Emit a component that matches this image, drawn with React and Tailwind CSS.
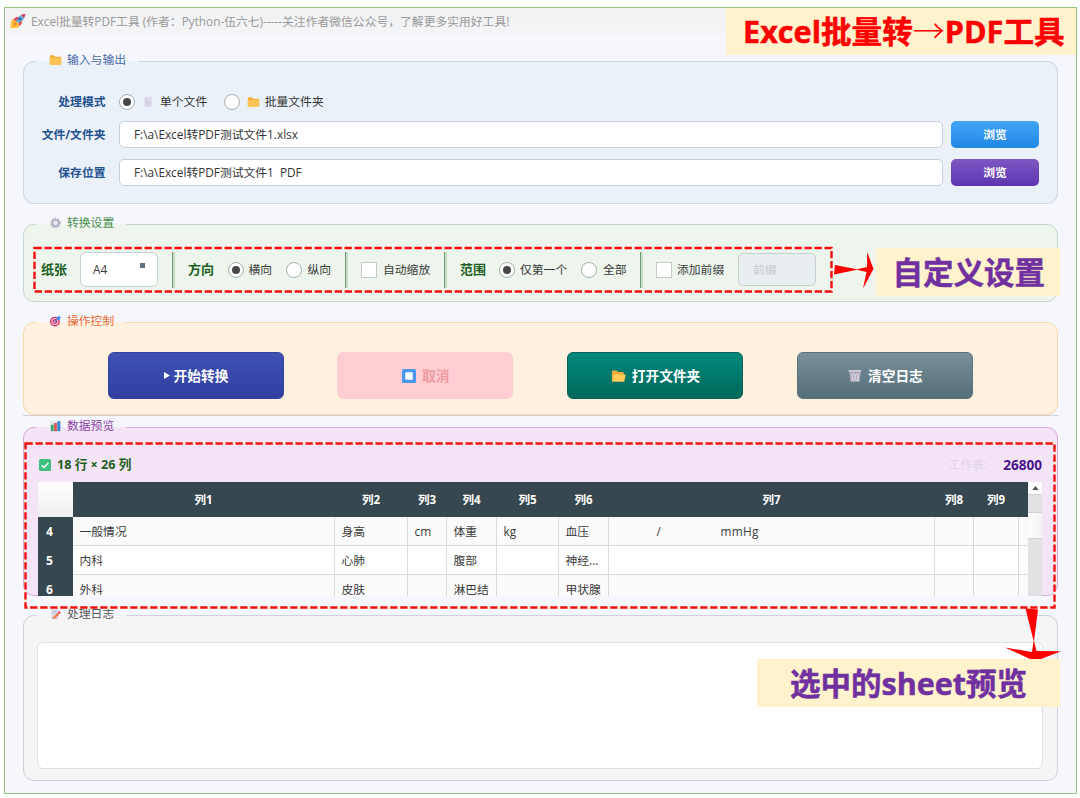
import clsx from "clsx";

const FolderIcon = ({ className }) => (
  <svg viewBox="0 0 16 14" className={className}>
    <path d="M1 2.5A1.2 1.2 0 0 1 2.2 1.3H6l1.7 1.6h6.1A1.2 1.2 0 0 1 15 4.1V12a1 1 0 0 1-1 1H2a1 1 0 0 1-1-1z" fill="#f5b03c" />
    <path d="M1 4.400h14v7.600a1 1 0 0 1-1 1H2a1 1 0 0 1-1-1z" fill="#fdc455" />
  </svg>
);

const OpenFolderIcon = ({ className }) => (
  <svg viewBox="0 0 16 14" className={className}>
    <path d="M1 2.2A1.2 1.2 0 0 1 2.2 1H6l1.6 1.6h5A1 1 0 0 1 13.500 3.600V12H1z" fill="#f0a93a" />
    <path d="M2.400 5.400h13.200L14.200 13H1z" fill="#fdcb58" />
  </svg>
);

const FileIcon = ({ className }) => (
  <svg viewBox="0 0 12 14" className={className}>
    <path d="M1.500 4L4.500 1h6v12h-9z" fill="#dfddeb" />
    <path d="M1.500 4h3V1z" fill="#cbc8dd" />
    <path d="M3 6.500h6M3 8.500h6M3 10.500h6" stroke="#cbc8dd" strokeWidth="1" />
  </svg>
);

const GearIcon = ({ className }) => (
  <svg viewBox="0 0 14 14" className={className}>
    <circle cx="7" cy="7" r="5.300" fill="none" stroke="#b5aec4" strokeWidth="1.800" strokeDasharray="2 1.330" />
    <circle cx="7" cy="7" r="3.600" fill="none" stroke="#aca4bd" strokeWidth="1.700" />
    <circle cx="7" cy="7" r="2.200" fill="#e9e6f2" />
  </svg>
);

const TargetIcon = ({ className }) => (
  <svg viewBox="0 0 14 14" className={className}>
    <circle cx="6.300" cy="7.700" r="5.800" fill="#d8356b" />
    <circle cx="6.300" cy="7.700" r="4.100" fill="#f3d3e2" />
    <circle cx="6.300" cy="7.700" r="2.900" fill="#d8356b" />
    <circle cx="6.300" cy="7.700" r="1.200" fill="#f3d3e2" />
    <path d="M6.300 7.700L10 4" stroke="#3b74c9" strokeWidth="1.200" />
    <path d="M8.600 2.800L11.300.3l.5 1.900 1.900.5L11.200 5.400H8.600z" fill="#3f8ee8" />
  </svg>
);

const ChartIcon = ({ className }) => (
  <svg viewBox="0 0 14 14" className={className}>
    <rect x="1" y="1" width="12" height="12" fill="#dfe3ec" />
    <rect x="1.500" y="5.500" width="3.300" height="7.500" fill="#35a768" />
    <rect x="5.300" y="3.500" width="3.300" height="9.500" fill="#e2574c" />
    <rect x="9.100" y="1.500" width="3.500" height="11.500" fill="#3b82d0" />
  </svg>
);

const MemoIcon = ({ className }) => (
  <svg viewBox="0 0 14 14" className={className}>
    <path d="M2 1h8.500v12H2z" fill="#dcdae9" />
    <path d="M3.500 4h5M3.500 6h4" stroke="#b9b5cc" strokeWidth=".8" />
    <path d="M4 11l5.800-6 2.200 2-5.800 5.500L3.400 13z" fill="#f4814f" />
    <path d="M9.800 5L11.300 3.400 13.300 5.400 12 7z" fill="#e23e57" />
  </svg>
);

const TrashIcon = ({ className }) => (
  <svg viewBox="0 0 14 14" className={className}>
    <path d="M1.200 2.500h11.600L11.600 13H2.400z" fill="#a9a4b3" />
    <path d="M3 4l2.500 8M6 4l2.200 8M9 4l1.300 8M11.500 4L9 12M8.500 4L5.500 12M5.500 4L3.500 11" stroke="#e6e1ec" strokeWidth=".75" />
    <rect x=".7" y="1" width="12.600" height="2" rx=".6" fill="#cdc7d6" />
  </svg>
);

const RocketIcon = ({ className }) => (
  <svg viewBox="0 0 16 16" className={className}>
    <path d="M4.800 9.500C6 5.500 9 2 15.300.7 14.500 7 10.500 10 6.600 11.300z" fill="#6fa9d2" />
    <path d="M3 6.500L6.500 3.800l2.300.4L5.500 9zM8 11l3.800-3.200v3L8.500 14z" fill="#e5485a" />
    <path d="M.8 15.200c-.3-2.700-.3-6.500 1.200-8.700l3.200 1L9 10.800c.4 1.600.2 2.700-.8 3.700-1.700.7-4.400.7-7.400.7z" fill="#fdbf3c" />
    <path d="M3 13c0-2 .8-3.300 2-3.800l1.900 1.900C6.400 12.300 5 13 3 13z" fill="#f58a3a" />
    <path d="M11.300 1.900c1.200-.6 2.500-1 4-1.200-.2 1.500-.6 2.800-1.200 4z" fill="#e5344d" />
    <circle cx="9.800" cy="6" r="1.600" fill="#2367b5" />
  </svg>
);

const StopIcon = ({ className }) => (
  <svg viewBox="0 0 14 14" className={className}>
    <rect width="14" height="14" rx="1.500" fill="#4a97ee" />
    <rect x="3.300" y="3.300" width="7.400" height="7.400" rx=".8" fill="#fff" />
  </svg>
);

const CheckIcon = ({ className }) => (
  <svg viewBox="0 0 12 12" className={className}>
    <rect width="12" height="12" rx="1.500" fill="#3fbf80" />
    <path d="M2.700 6.200l2.300 2.300 4.400-4.700" fill="none" stroke="#fff" strokeWidth="1.400" />
  </svg>
);

function Panel({ icon: Icon, title, className, legendClass, children }) {
  return (
    <fieldset className={clsx("ml-[18px] w-[1035px] shrink-0 rounded-[11px] border", className)}>
      <legend className={clsx("ml-3 flex h-4 items-center gap-[5px] pl-[13px] pb-[3px] text-[11.8px] leading-none whitespace-nowrap", legendClass)}>
        <Icon className="h-3 w-[13px]" />
        <span>{title}</span>
      </legend>
      {children}
    </fieldset>
  );
}

function Radio({ checked, className }) {
  return (
    <span className={clsx("flex size-4 shrink-0 items-center justify-center rounded-full border border-[#a9adab] bg-white", className)}>
      {checked && <span className="size-2 rounded-full bg-[#474747]" />}
    </span>
  );
}

const CheckBox = ({ className }) => <span className={clsx("size-4 shrink-0 border border-[#c3cbc4] bg-white", className)} />;

const Divider = ({ className }) => (
  <span className={clsx("h-9 w-[3px] shrink-0 border-l border-[#6f9a75] bg-[#c3dcc5]", className)} />
);

const columns = [
  { label: "列1", width: "w-[262px]" },
  { label: "列2", width: "w-[73px]" },
  { label: "列3", width: "w-[39px]" },
  { label: "列4", width: "w-[50px]" },
  { label: "列5", width: "w-[62px]" },
  { label: "列6", width: "w-[50px]" },
  { label: "列7", width: "w-[326px]" },
  { label: "列8", width: "w-[39px]" },
  { label: "列9", width: "w-[45px]" },
];

const rows = [
  { id: 4, cells: ["一般情况", "身高", "cm", "体重", "kg", "血压", ["/", "mmHg"], "", ""] },
  { id: 5, cells: ["内科", "心肺", "", "腹部", "", "神经...", "", "", ""] },
  { id: 6, cells: ["外科", "皮肤", "", "淋巴结", "", "甲状腺", "", "", ""] },
];

function PreviewTable() {
  return (
    <div className="ml-[14px] flex h-[114px] w-[1004px] overflow-hidden text-[11.8px] leading-none">
      <div className="w-[990px] overflow-hidden">
        <div className="flex h-[35px] bg-[#37474f] font-bold text-white">
          <div className="w-[35px] shrink-0 bg-linear-to-b from-white to-[#eeeeee]" />
          {columns.map((col) => (
            <div key={col.label} className={clsx("flex shrink-0 items-center justify-center pr-px text-[11.500px]", col.width)}>
              {col.label}
            </div>
          ))}
        </div>
        {rows.map((row, i) => (
          <div key={row.id} className={clsx("flex h-[29px] text-[#3a3a3a]", i % 2 ? "bg-white" : "bg-[#fafafa]")}>
            <div className="flex w-[35px] shrink-0 items-center bg-[#37474f] pt-px pl-2 text-xs font-bold text-white">{row.id}</div>
            {row.cells.map((cell, n) => (
              <div
                key={n}
                className={clsx("flex shrink-0 items-center overflow-hidden border-r border-b border-[#d9dcdc] pt-px pl-[6.500px] whitespace-nowrap", columns[n].width)}
              >
                {Array.isArray(cell) ? (
                  <>
                    <span className="ml-[41px] w-16">{cell[0]}</span>
                    <span className="tracking-[0.300px]">{cell[1]}</span>
                  </>
                ) : (
                  cell
                )}
              </div>
            ))}
            <div className="grow border-b border-[#d9dcdc]" />
          </div>
        ))}
      </div>
      <div className="flex w-[14px] flex-col bg-[#e2e2e4]">
        <div className="flex h-[13px] items-center justify-center border-b border-[#cfcfcf] bg-white">
          <svg viewBox="0 0 8 5" className="h-[4px] w-[7px]">
            <path d="M0 5L4 0l4 5z" fill="#555" />
          </svg>
        </div>
        <div className="mt-[17px] h-[27px] border-y border-[#d2d2d2] bg-linear-to-r from-white to-[#f2f2f2]" />
      </div>
    </div>
  );
}

function PathRow({ label, value, button, className }) {
  return (
    <div className={clsx("flex h-[27px] items-center", className)}>
      <span className="w-[81.500px] text-right font-bold text-[#24518f]">{label}</span>
      <div className="ml-[13.500px] flex h-[27px] w-[824px] items-center rounded-[5px] border border-[#c9cfd6] bg-white pl-[14px] text-[#333] [word-spacing:3px]">
        {value}
      </div>
      <button className={clsx("ml-[8px] h-[27px] w-[88px] rounded-[5px] bg-linear-to-b font-bold text-white", button)}>浏览</button>
    </div>
  );
}

const actions = [
  {
    label: "开始转换",
    style: "border-[#34419b] from-[#3f51b5] to-[#303f9f] text-white gap-[4px]",
    icon: () => (
      <svg viewBox="0 0 6 7" className="h-[7px] w-[6px]">
        <path d="M0 0l6 3.500L0 7z" fill="#fff" />
      </svg>
    ),
  },
  { label: "取消", style: "border-[#ffcdd2] from-[#ffcdd2] to-[#ffcdd2] text-[#ee9ba2] gap-[6px]", icon: () => <StopIcon className="size-[14px]" /> },
  { label: "打开文件夹", style: "border-[#0b6156] from-[#00897b] to-[#00695c] text-white gap-[6px]", icon: () => <OpenFolderIcon className="h-[14px] w-[15px]" /> },
  { label: "清空日志", style: "border-[#5d707a] from-[#78909c] to-[#546e7a] text-white gap-[6px]", icon: () => <TrashIcon className="size-[14px]" /> },
];

// red dashed frames and arrows drawn over the window
function Annotations() {
  return (
    <>
      <svg className="pointer-events-none absolute inset-0 h-[798px] w-[1080px]" viewBox="0 0 1080 798" fill="none">
        <g stroke="#fff0e0" strokeWidth="3">
          <rect x="34.500" y="248" width="797" height="43.500" />
          <rect x="25.500" y="443.500" width="1029" height="164" />
        </g>
        <g stroke="#ee1013" strokeWidth="2.400" strokeDasharray="7.300 2.700">
          <rect x="34.500" y="248" width="797" height="43.500" />
          <rect x="25.500" y="443.500" width="1029" height="164" />
        </g>
        <g fill="#fe0000">
          <path d="M835 265l22 4.200 10-2.200.2-15L873.500 269 863 288.500l3.500-16.500-9.500-2.200-23 4.700z" />
          <path d="M1025.500 608.500l12.500 1-4 31.500 2.500 10 24.500.3-20 7.700h-11l-25-11.500 27 4.500 1.600-11z" />
        </g>
      </svg>
      <div className="absolute top-[8px] left-[726px] flex h-[47px] w-[350px] items-center bg-[#fff2cc] pb-px pl-[17px] text-[30.600px] font-bold whitespace-nowrap text-[#fe0000] [-webkit-text-stroke:0.500px_#fe0000]">
        Excel批量转
        <span className="w-8 text-[32px] font-light [-webkit-text-stroke:0px]">→</span>
        PDF工具
      </div>
      <div className="absolute top-[248px] left-[876px] flex h-12 w-[184px] items-center bg-[#fff2cc] pl-[16.500px] text-[30.500px] font-bold whitespace-nowrap text-[#7030a0] [-webkit-text-stroke:0.500px_#7030a0]">
        自定义设置
      </div>
      <div className="absolute top-[659px] left-[757px] flex h-12 w-[303px] items-center bg-[#fff2cc] pl-[33px] text-[30.500px] font-bold whitespace-nowrap text-[#7030a0] [-webkit-text-stroke:0.500px_#7030a0]">
        选中的sheet预览
      </div>
    </>
  );
}

export default function App() {
  return (
    <div className="relative h-[798px] w-[1080px] overflow-hidden bg-white pt-[7px] pl-1 font-['Open_Sans','Noto_Sans_CJK_SC',sans-serif] text-[11.8px] leading-none">
      <div className="flex h-[787px] w-[1073px] flex-col border border-[#93c47d] bg-[#f5f7fc]">
        <header className="flex h-[27px] shrink-0 items-center gap-[5px] bg-linear-to-b from-[#f2f2f2] to-[#f4f5f8] pl-[5px] text-[11.800px] whitespace-nowrap text-[#999]">
          <RocketIcon className="mb-[2px] size-4" />
          <span>Excel批量转PDF工具 (作者：Python-伍六七)-----关注作者微信公众号，了解更多实用好工具!</span>
        </header>

        <Panel icon={FolderIcon} title="输入与输出" className="mt-[18px] h-[151px] border-[#cfd5e1] bg-[#eaf1f9]" legendClass="w-[102px] text-[#4a69a8]">
          <div className="mt-6 flex h-[17px] items-center text-[#333]">
            <span className="w-[81.500px] text-right font-bold text-[#24518f]">处理模式</span>
            <Radio checked className="ml-[13.500px]" />
            <FileIcon className="ml-[7px] h-[12px] w-[12px]" />
            <span className="ml-[6px]">单个文件</span>
            <Radio className="ml-[16.500px]" />
            <FolderIcon className="ml-[7px] h-3 w-[13px]" />
            <span className="ml-[5px]">批量文件夹</span>
          </div>
          <PathRow label="文件/文件夹" value="F:\a\Excel转PDF测试文件1.xlsx" className="mt-[11px]" button="from-[#42a5f5] to-[#1e88e5]" />
          <PathRow label="保存位置" value="F:\a\Excel转PDF测试文件1 PDF" className="mt-[11px]" button="from-[#7e57c2] to-[#5e35b1]" />
        </Panel>

        <Panel icon={GearIcon} title="转换设置" className="mt-[12px] h-[86px] border-[#c5d8cf] bg-[#edf5ed]" legendClass="w-[90px] text-[#4b8e50]">
          <div className="mt-[19px] flex h-9 items-center pt-px whitespace-nowrap text-[#3a3a3a]">
            <span className="ml-[17px] w-[39px] text-[13px] font-bold text-[#1b5e20]">纸张</span>
            <div className="flex h-[35px] w-[78px] shrink-0 items-center justify-between rounded-[6px] border border-[#c5d3d3] bg-white pr-3 pl-3">
              A4
              <span className="mb-2 size-[5px] bg-[#5f7482]" />
            </div>
            <Divider className="ml-[14px]" />
            <span className="ml-[13px] w-[39px] text-[13px] font-bold text-[#1b5e20]">方向</span>
            <Radio checked className="ml-[0.500px]" />
            <span className="ml-[5px] w-[37.500px]">横向</span>
            <Radio />
            <span className="ml-[5.500px] w-[37.500px]">纵向</span>
            <Divider />
            <CheckBox className="ml-[13px]" />
            <span className="ml-[6px] w-[61px]">自动缩放</span>
            <Divider />
            <span className="ml-[13px] w-[39px] text-[13px] font-bold text-[#1b5e20]">范围</span>
            <Radio checked />
            <span className="ml-[5px] w-[61px]">仅第一个</span>
            <Radio />
            <span className="ml-[6px] w-[37px]">全部</span>
            <Divider />
            <CheckBox className="ml-[13px]" />
            <span className="ml-[5px] w-[61px]">添加前缀</span>
            <div className="flex h-[33px] w-[78px] shrink-0 items-center rounded-[5px] border border-[#c5d0d0] bg-[#e9eef0] pl-[14px] text-[#c3cacc]">前缀</div>
          </div>
        </Panel>

        <Panel icon={TargetIcon} title="操作控制" className="mt-[12px] h-[101px] border-[#f5dba6] bg-[#fff1df]" legendClass="w-[90px] text-[#ea6c35]">
          <div className="mt-[22px] ml-[83.500px] flex gap-[53.800px]">
            {actions.map(({ label, style, icon: Icon }) => (
              <button key={label} className={clsx("flex h-[47px] w-44 items-center justify-center rounded-[6px] border bg-linear-to-b pl-px text-[13.700px] font-bold", style)}>
                <Icon />
                {label}
              </button>
            ))}
          </div>
        </Panel>
        <div className="ml-[18px] h-px w-[1035px] shrink-0 bg-[#cfd0d8]" />

        <Panel icon={ChartIcon} title="数据预览" className="mt-[3px] h-[177px] border-[#d9abe0] bg-[#f3e5f5]" legendClass="w-[90px] text-[#8b3fa8]">
          <div className="mt-[21px] flex h-[18px] items-center whitespace-nowrap">
            <CheckIcon className="ml-[15px] size-3" />
            <span className="ml-[6px] text-[12.600px] font-bold text-[#1b5e20]">18 行 × 26 列</span>
            <span className="ml-auto text-[#e0d3e5]">工作表:</span>
            <span className="mr-[15px] ml-[16px] text-[13.600px] font-bold text-[#4a148c]">26800</span>
          </div>
          <div className="mt-[8px]">
            <PreviewTable />
          </div>
        </Panel>

        <Panel icon={MemoIcon} title="处理日志" className="mt-[11px] h-[174px] border-[#cfd1d6] bg-[#f5f5f5]" legendClass="w-[90px] text-[#555]">
          <div className="mt-[19px] ml-[13px] h-[127px] w-[1006px] rounded-[6px] border border-[#dcdee0] bg-white" />
        </Panel>
      </div>
      <Annotations />
    </div>
  );
}
